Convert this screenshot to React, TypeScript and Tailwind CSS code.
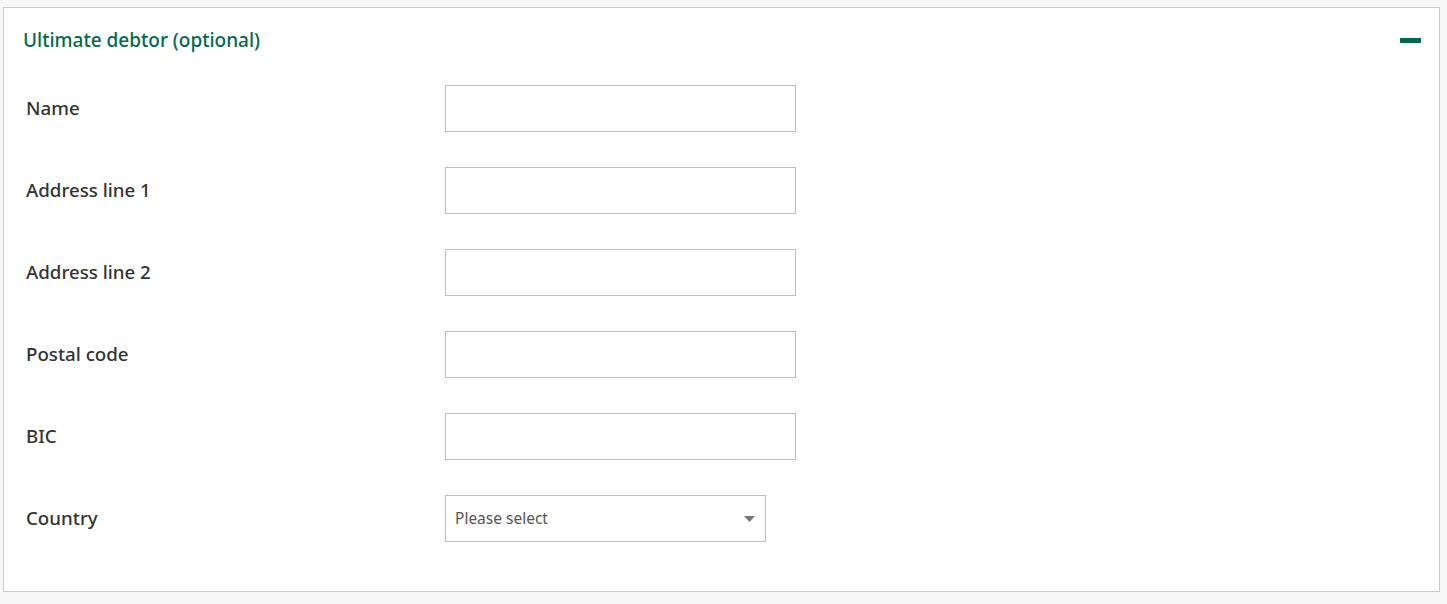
const fields = ["Name", "Address line 1", "Address line 2", "Postal code", "BIC"];

function FieldRow({ label, children }: { label: string; children: React.ReactNode }) {
  return (
    <div className="flex items-center h-[47px]">
      <label className="w-[441px] pl-[22px] text-[18.7px] font-medium text-[#333333]">{label}</label>
      {children}
    </div>
  );
}

export default function App() {
  return (
    <div
      className="min-h-screen bg-[#f7f7f7] pt-[7px] pl-[3px] pr-[7px] pb-[12px]"
      style={{ fontFamily: '"Noto Sans", "Open Sans", sans-serif' }}
    >
      <section className="bg-white border border-[#cccccc]">
        <header className="flex items-center justify-between h-[64px] pl-[19px] pr-[18px]">
          <h2 className="text-[19px] font-medium text-[#006a4d]">Ultimate debtor (optional)</h2>
          <button type="button" aria-label="Collapse" className="w-[21px] h-[5px] bg-[#006a4d]" />
        </header>

        <div className="flex flex-col gap-[35px] pt-[13px] pb-[49px]">
          {fields.map((f) => (
            <FieldRow key={f} label={f}>
              <input type="text" className="w-[351px] h-[47px] border border-[#bdbdbd] bg-white outline-none" />
            </FieldRow>
          ))}
          <FieldRow label="Country">
            <div className="relative w-[321px] h-[47px] border border-[#bdbdbd] flex items-center pl-[9px]">
              <span className="text-[15.5px] text-[#555555]">Please select</span>
              <svg className="absolute right-[10px] top-[20px]" width="11" height="6" viewBox="0 0 11 6">
                <path d="M0 0H11L5.5 6Z" fill="#777777" />
              </svg>
            </div>
          </FieldRow>
        </div>
      </section>
    </div>
  );
}
